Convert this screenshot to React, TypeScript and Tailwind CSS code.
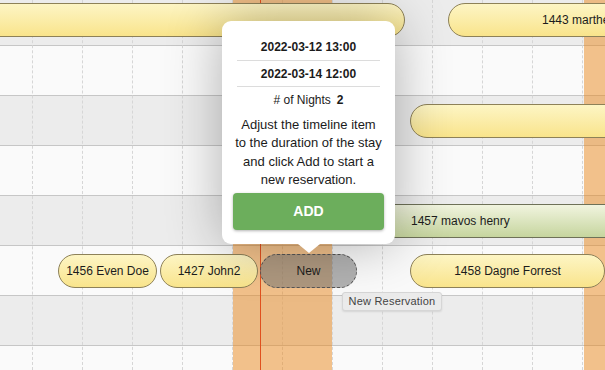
import React from 'react';

type Kind = 'yellow' | 'green' | 'new';

type Item = {
  id: string;
  label?: string;
  left: number;
  width: number;
  kind: Kind;
  align?: string;
};

type Row = { bg: string; items: Item[] };

const ROWS: Row[] = [
  {
    bg: 'bg-[#ececec]',
    items: [
      { id: 'a', left: -30, width: 435, kind: 'yellow' },
      { id: 'b', label: '1443 marthe lindqvist', left: 448, width: 320, kind: 'yellow', align: 'justify-start pl-[93px]' },
    ],
  },
  { bg: 'bg-[#fafafa]', items: [] },
  {
    bg: 'bg-[#ececec]',
    items: [{ id: 'c', left: 410, width: 320, kind: 'yellow' }],
  },
  { bg: 'bg-[#fafafa]', items: [] },
  {
    bg: 'bg-[#ececec]',
    items: [{ id: 'd', label: '1457 mavos henry', left: 340, width: 330, kind: 'green', align: 'justify-start pl-[70px]' }],
  },
  {
    bg: 'bg-[#fafafa]',
    items: [
      { id: 'e', label: '1456 Even Doe', left: 58, width: 99, kind: 'yellow' },
      { id: 'f', label: '1427 John2', left: 160, width: 98, kind: 'yellow' },
      { id: 'g', label: 'New', left: 260, width: 97, kind: 'new' },
      { id: 'h', label: '1458 Dagne Forrest', left: 410, width: 195, kind: 'yellow' },
    ],
  },
  { bg: 'bg-[#ececec]', items: [] },
  { bg: 'bg-[#fafafa]', items: [] },
];

const kindClass: Record<Kind, string> = {
  yellow: 'border border-[#8d8158] bg-gradient-to-b from-[#fdf5c4] to-[#f9e48b]',
  green: 'border border-[#6e7158] bg-gradient-to-b from-[#f1f4df] to-[#c6d59e]',
  new: 'border border-dashed border-[#555] bg-[#777]/55',
};

const TimelineItem: React.FC<{ item: Item }> = ({ item }) => (
  <div
    className={`absolute top-[8px] z-10 flex h-[34px] items-center overflow-hidden whitespace-nowrap rounded-full text-[12px] text-[#1c1c1c] ${
      item.align ?? 'justify-center'
    } ${kindClass[item.kind]}`}
    style={{ left: item.left, width: item.width }}
  >
    {item.label}
  </div>
);

const App: React.FC = () => {
  return (
    <div className="relative h-[370px] w-[605px] overflow-hidden bg-white font-['Liberation_Sans',Arial,sans-serif]">
      {/* Rows */}
      <div className="-mt-[5px] flex flex-col">
        {ROWS.map((row, i) => (
          <div
            key={i}
            className={`relative h-[50px] shrink-0 ${row.bg} ${i > 0 ? 'border-t border-[#c6c6c6]' : ''}`}
          >
            {row.items.map((item) => (
              <TimelineItem key={item.id} item={item} />
            ))}
          </div>
        ))}
      </div>

      {/* Day grid */}
      <div className="pointer-events-none absolute inset-0 flex pl-[32px]">
        {Array.from({ length: 12 }).map((_, i) => (
          <div key={i} className="h-full w-[50px] shrink-0 border-l border-dashed border-[#d6d6d6]" />
        ))}
      </div>

      {/* Highlighted days */}
      <div className="pointer-events-none absolute bottom-0 left-[233px] top-0 w-[99px] bg-[#ea881c]/50" />
      <div className="pointer-events-none absolute bottom-0 left-[584px] top-0 w-[30px] bg-[#ea881c]/50" />

      {/* Current time */}
      <div className="pointer-events-none absolute bottom-0 left-[260px] top-0 w-px bg-[#e0501e]" />

      {/* Tooltip */}
      <div className="absolute left-[342px] top-[292px] z-20 flex h-[19px] w-[100px] items-center justify-center rounded-[3px] border border-[#d6d6d6] bg-[#ebebeb] text-[11px] tracking-[0.2px] text-[#444] shadow-[0_1px_2px_rgba(0,0,0,0.1)]">
        New Reservation
      </div>

      {/* Popup */}
      <div className="absolute left-[222px] top-[21px] z-30 w-[173px] rounded-[9px] bg-white px-[11px] pb-[14px] pt-[13px] text-center text-[#1b1b1b] shadow-[0_0_55px_rgba(0,0,0,0.3)]">
        <div className="mx-[4px] flex h-[27px] items-center justify-center border-b border-[#dcdcdc] text-[12px] font-bold">
          2022-03-12 13:00
        </div>
        <div className="mx-[4px] flex h-[26px] items-center justify-center border-b border-[#dcdcdc] text-[12px] font-bold">
          2022-03-14 12:00
        </div>
        <div className="flex h-[26px] items-center justify-center text-[12px]">
          # of Nights <b className="ml-[6px]">2</b>
        </div>
        <p className="mt-[3px] whitespace-nowrap text-[13px] leading-[18.3px]">
          Adjust the timeline item
          <br />
          to the duration of the stay
          <br />
          and click Add to start a
          <br />
          new reservation.
        </p>
        <button className="mt-[4px] h-[37px] w-full rounded-[4px] bg-[#6cae5c] text-[14px] font-bold text-white shadow-[0_1px_3px_rgba(0,0,0,0.3)]">
          ADD
        </button>
        <div className="absolute left-1/2 top-full h-0 w-0 -translate-x-1/2 border-x-[11px] border-t-[9px] border-x-transparent border-t-white" />
      </div>
    </div>
  );
};

export default App;
